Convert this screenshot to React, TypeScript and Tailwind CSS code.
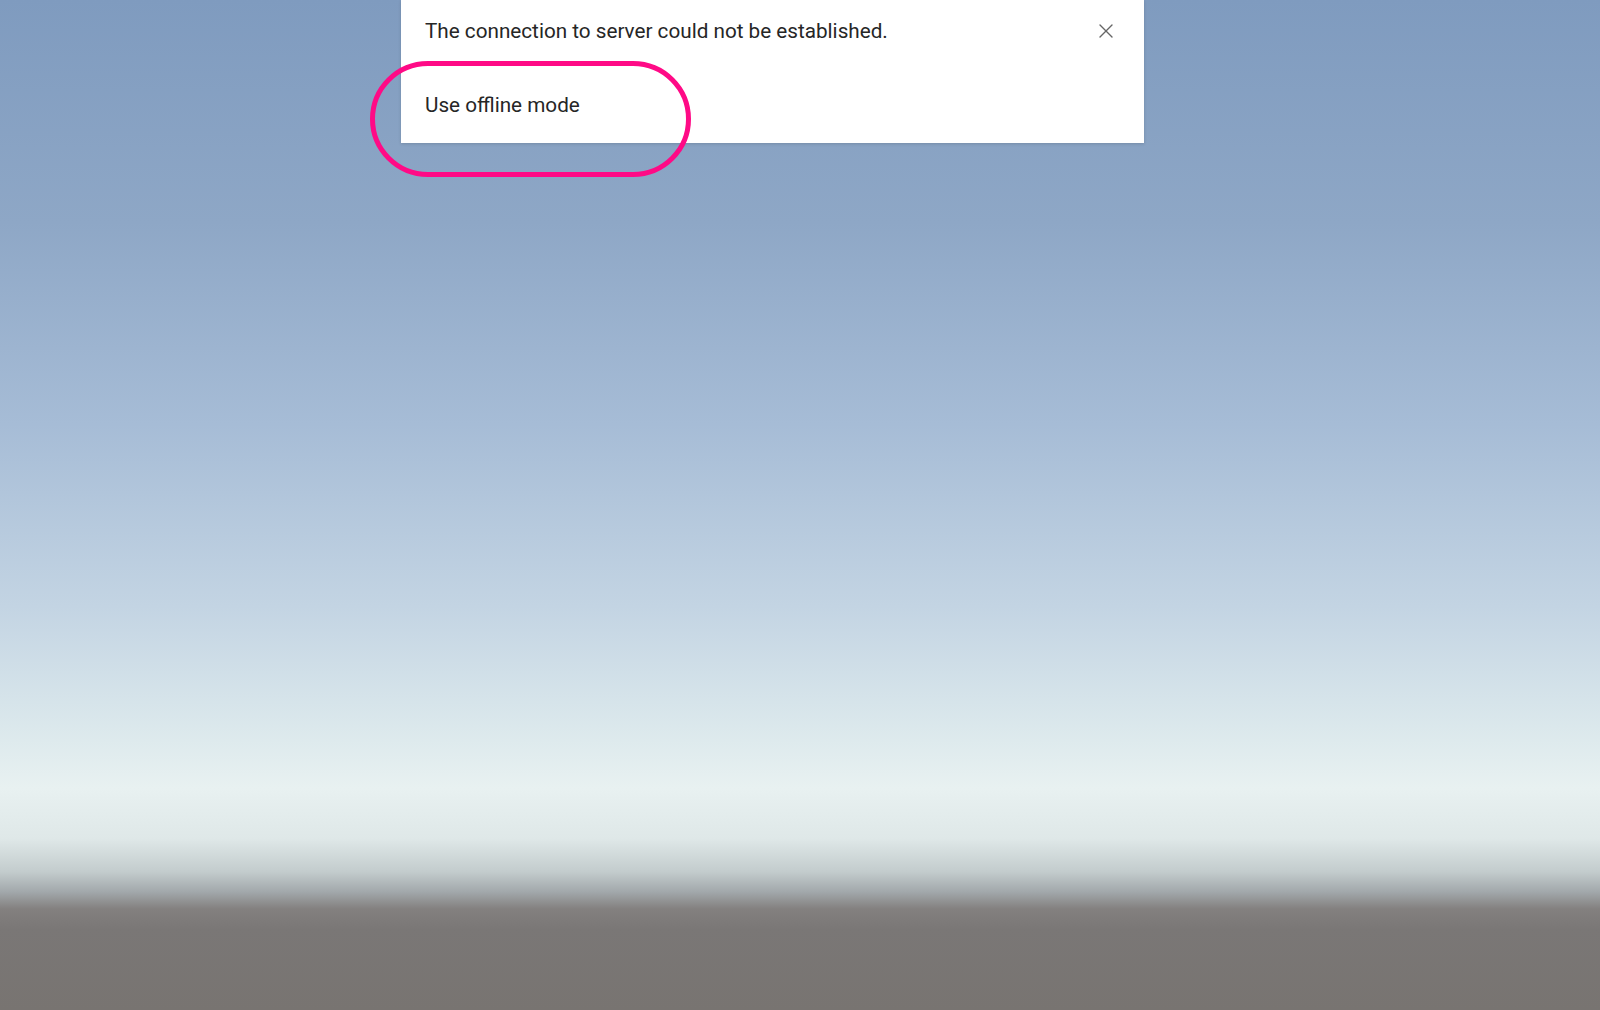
import { X } from "lucide-react";

export default function App() {
  return (
    <div
      className="relative h-[1010px] w-[1600px] overflow-hidden bg-[linear-gradient(180deg,#7f9bbf_0%,#8ea7c6_22%,#a6bcd6_42%,#c3d4e3_60%,#dbe8ec_72%,#e8f1f1_78%,#dfe8e8_83%,#c3cccd_86.3%,#a2a8ab_88.3%,#83807f_90%,#7a7776_92%,#787471_100%)] font-['Roboto','Liberation_Sans',sans-serif]"
    >
      <div className="relative ml-[401px] flex h-[143px] w-[743px] flex-col bg-white shadow-[0_1px_3px_rgba(0,0,0,0.15)]">
        <div className="flex h-[62px] items-center justify-between pl-[24px] pr-[26px]">
          <span className="text-[20.7px] leading-[24px] text-[#262626]">
            The connection to server could not be established.
          </span>
          <X className="h-[24px] w-[24px] text-[#666]" strokeWidth={1.4} />
        </div>
        <div className="pl-[24px] pt-[31px]">
          <span className="text-[20.7px] leading-[24px] text-[#262626]">Use offline mode</span>
        </div>
      </div>
      <div className="absolute left-[370px] top-[61px] h-[116px] w-[321px] rounded-full border-[5px] border-[#ff0a86]" />
    </div>
  );
}
